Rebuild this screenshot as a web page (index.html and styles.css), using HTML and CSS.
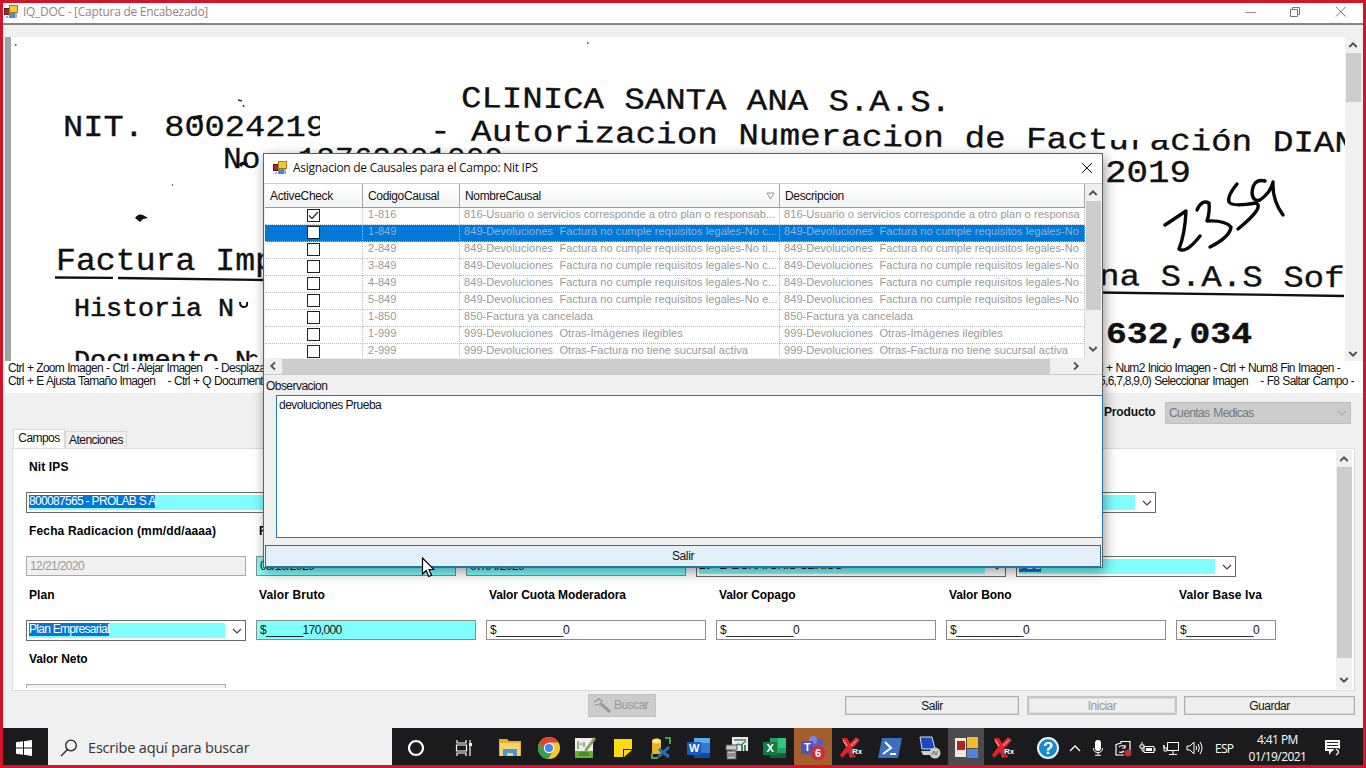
FILE: index.html
```html
<!DOCTYPE html>
<html lang="es">
<head>
<meta charset="utf-8">
<title>IQ_DOC - [Captura de Encabezado]</title>
<link rel="stylesheet" href="styles.css">
</head>
<body>
<svg class="defs" width="0" height="0">
  <symbol id="app" viewBox="0 0 14 14"><rect x=".5" y="3.5" width="6" height="6" fill="#a8281c" stroke="#5e1510"/><rect x="5.5" y=".5" width="8" height="7" fill="#f5c73c" stroke="#a57a14"/><rect x="5" y="8" width="6" height="5" fill="#4f86dc"/><path d="M2 11h2v2H2zM11 8h2v5h-2z" fill="#9cb4dc"/></symbol>
  <symbol id="up" viewBox="0 0 10 8"><path d="M1.3 6 5 2.3 8.7 6" fill="none" stroke="#505050" stroke-width="1.9"/></symbol>
  <symbol id="down" viewBox="0 0 10 8"><path d="M1.3 2 5 5.7 8.7 2" fill="none" stroke="#505050" stroke-width="1.9"/></symbol>
  <symbol id="chev" viewBox="0 0 10 8"><path d="M1 2 5 6 9 2" fill="none" stroke="currentColor" stroke-width="1.2"/></symbol>
  <symbol id="rx" viewBox="0 0 24 24"><path d="M3 2 8 2 11 7 17 1 21 4 14 12 17 21 11 22 9 16 3 22 1 19 7 11z" fill="#d9242b"/><path d="M4 4l4 6M18 4l-6 6" stroke="#ff8585" stroke-width="1.5"/><rect x="13" y="11" width="11" height="8" fill="#1d1d1f" opacity=".8"/><text x="13" y="18" font-size="8" font-weight="bold" fill="#fff" font-family="Liberation Sans, sans-serif">Rx</text></symbol>
</svg>
<div class="screen">
  <header class="title">
    <svg width="14" height="14"><use href="#app"/></svg>
    <span class="title-text">IQ_DOC - [Captura de Encabezado]</span>
    <svg class="winbtns" width="105" height="12" fill="none" stroke="#8a6a74"><path d="M1 6.500h11" stroke="#c08090"/><path d="M46.500 3.500h7v7h-7zM48.500 3.500v-2h7v7h-2"/><path d="M92 1l9.500 9.500M101.500 1 92 10.500"/></svg>
  </header>

  <section class="viewer">
    <svg class="doc" width="1340" height="324" viewBox="5 37 1340 324" font-family="Liberation Mono, monospace" font-size="32" fill="#111">
      <rect x="5" y="37" width="1340" height="324" fill="#fff"/>
      <rect x="5" y="37" width="6" height="324" fill="#a0a4a2"/>
      <g stroke="#111" stroke-width=".35">
        <text x="461" y="107" textLength="490" lengthAdjust="spacingAndGlyphs" font-size="30" transform="rotate(.5 461 107)">CLINICA SANTA ANA S.A.S.</text>
        <text x="430" y="140" textLength="925" lengthAdjust="spacingAndGlyphs" font-size="30" transform="rotate(.75 430 140)">- Autorizacion Numeracion de Facturación DIAN</text>
        <text x="63" y="136" textLength="263" lengthAdjust="spacingAndGlyphs" font-size="30">NIT. 80024219</text>
        <text x="223" y="168" textLength="280" lengthAdjust="spacingAndGlyphs" font-size="30">No. 18762001000</text>
        <text x="1105" y="182" textLength="86" lengthAdjust="spacingAndGlyphs" font-size="32">2019</text>
        <text x="56" y="270" textLength="219" lengthAdjust="spacingAndGlyphs" font-size="31">Factura Imp</text>
        <text x="74" y="316" textLength="160" lengthAdjust="spacingAndGlyphs" font-size="25" stroke-width=".5">Historia N</text>
        <text x="74" y="368" textLength="177" lengthAdjust="spacingAndGlyphs" font-size="25" stroke-width=".5">Documento N</text>
        <text x="1099" y="285" textLength="266" lengthAdjust="spacingAndGlyphs" font-size="30" transform="rotate(.5 1099 285)">na S.A.S Soft</text>
        <text x="1106" y="343" textLength="146" lengthAdjust="spacingAndGlyphs" font-size="29" font-weight="bold">632,034</text>
      </g>
      <path d="M320 114h12v24h-12z" fill="#fff"/>
      <path d="M1106 125h64v15h-64z" fill="#fff"/>
      <path d="M193 119q4-3 9-2M240 166q3-5 7-1" fill="none" stroke="#111" stroke-width="3.500"/>
      <path d="M135 218q3-5 8-3l5 3-5 1-3 3z"/>
      <path d="M238 100l4 1M243 105l1 2M172 185h1M15 45h1.500M587 43h1.500" stroke="#333" stroke-width="1.500"/>
      <path d="M240 302q0 5 4 5 4 0 3-5" fill="none" stroke="#111" stroke-width="2"/>
      <path d="M250 357q4-4 7 0" fill="none" stroke="#111" stroke-width="2"/>
      <path d="M55 277.500l58 .4M118 278l146 2M1100 292.500 1344 296" stroke="#111" stroke-width="2.300"/>
      <g fill="none" stroke="#080808" stroke-width="3.400" stroke-linecap="round" stroke-linejoin="round">
        <path d="M1165 225 1186 211Q1185 234 1179 249 1186 254 1200 236"/>
        <path d="M1197 210Q1202 199 1209 203 1210 212 1207 221 1225 220 1231 227 1230 237 1210 247" />
        <path d="M1237 184Q1227 196 1229 202 1232 207 1256 203 1265 207 1238 229"/>
        <path d="M1265 181Q1253 178 1252 193 1253 202 1260 200 1271 192 1273 182 1272 200 1283 215"/>
      </g>
    </svg>
    <div class="vbar"><svg width="10" height="16"><use href="#up" y="4" width="10" height="8"/></svg><i class="thumb doc-thumb"></i><svg class="end" width="10" height="14"><use href="#down" y="3" width="10" height="8"/></svg></div>
  </section>

  <section class="help">
    <div class="help-left"><p>Ctrl + Zoom Imagen - Ctrl - Alejar Imagen &nbsp;&nbsp; - Desplazar</p><p>Ctrl + E Ajusta Tamaño Imagen &nbsp;&nbsp; - Ctrl + Q Documento</p></div>
    <div class="help-right"><p>Ctrl + Num2 Inicio Imagen - Ctrl + Num8 Fin Imagen -</p><p>5,6,7,8,9,0) Seleccionar Imagen &nbsp;&nbsp; - F8 Saltar Campo -</p></div>
  </section>

  <section class="product"><b>Producto</b><div class="product-sel"><span>Cuentas Medicas</span><svg width="10" height="8"><use href="#chev"/></svg></div></section>

  <nav class="tabs"><span class="tab on">Campos</span><span class="tab">Atenciones</span></nav>

  <section class="panel">
    <div class="form">
      <div class="row"><div class="field w1130"><label>Nit IPS</label><div class="combo"><span class="fill"><mark>800087565 - PROLAB S A</mark></span><svg width="10" height="8"><use href="#chev"/></svg></div></div></div>
      <div class="row">
        <div class="field w220"><label class="wide">Fecha Radicacion (mm/dd/aaaa)</label><div class="text off">12/21/2020</div></div>
        <div class="field w200"><label>Fecha</label><div class="text cyan">08/10/2020</div></div>
        <div class="field w220"><label></label><div class="text cyan">07/04/2020</div></div>
        <div class="field w310"><label></label><div class="combo"><span class="fill lab">20 - LABORATORIO CLINICO</span><svg width="10" height="8"><use href="#chev"/></svg></div></div>
        <div class="field w220"><label></label><div class="combo"><span class="fill"><mark>PBS</mark></span><svg width="10" height="8"><use href="#chev"/></svg></div></div>
      </div>
      <div class="row">
        <div class="field w220"><label>Plan</label><div class="combo"><span class="fill"><mark class="tight">Plan Empresarial</mark></span><svg width="10" height="8"><use href="#chev"/></svg></div></div>
        <div class="field w220"><label>Valor Bruto</label><div class="text cyan">$______170,000</div></div>
        <div class="field w220"><label class="narrow">Valor Cuota Moderadora</label><div class="text">$___________0</div></div>
        <div class="field w220"><label class="narrow">Valor Copago</label><div class="text">$___________0</div></div>
        <div class="field w220"><label class="narrow">Valor Bono</label><div class="text">$___________0</div></div>
        <div class="field w100"><label>Valor Base Iva</label><div class="text">$___________0</div></div>
      </div>
      <div class="row"><div class="field w200"><label class="narrow">Valor Neto</label><div class="text off"></div></div></div>
    </div>
    <div class="vbar"><svg width="10" height="17"><use href="#up" y="5" width="10" height="8"/></svg><i class="thumb form-thumb"></i><svg class="end" width="10" height="16"><use href="#down" y="3" width="10" height="8"/></svg></div>
  </section>

  <footer class="actions">
    <div class="find"><svg width="20" height="18" fill="none" stroke="#979797"><path d="M1 5l5-3 3 2-2 3-5 1" stroke-width="1.200"/><path d="M8 7l9 8" stroke-width="3"/></svg><span>Buscar</span></div>
    <div class="btn salir">Salir</div><div class="btn off iniciar">Iniciar</div><div class="btn guardar">Guardar</div>
  </footer>

  <div class="taskbar">
    <div class="start"><svg width="16" height="16" fill="#fff"><path d="M0 2.300 7 1.300V7.500H0zM8 1.200 16 0v7.500H8zM0 8.500h7v6.200L0 13.700zM8 8.500h8V16l-8-1.200z"/></svg></div>
    <div class="search"><svg width="18" height="18" fill="none" stroke="#222" stroke-width="1.300"><circle cx="11" cy="6.500" r="5.300"/><path d="M7.500 10.500 1 17"/></svg><span>Escribe aquí para buscar</span></div>
    <div class="apps">
      <div class="app a48"><svg width="18" height="18"><circle cx="9" cy="9" r="7" fill="none" stroke="#fff" stroke-width="2.200"/></svg></div>
      <div class="app a48"><svg width="18" height="18" fill="none" stroke="#fff" stroke-width="1.200"><path d="M2 1v3h9V1M2 17v-3h9v3M1.500 6h10v6h-10zM15 1v16"/><path d="M14 4h3v3h-3z" fill="#fff" stroke="none"/></svg></div>
      <div class="app a42"><svg width="22" height="19"><path d="M0 1h8l2 2h12v15H0z" fill="#e9a92f"/><path d="M1 5h20v13H1z" fill="#fbd468"/><path d="M4 18v-7h14v7h-4v-3H8v3z" fill="#3a9be0"/></svg></div>
      <div class="app a35"><svg width="22" height="22"><circle cx="11" cy="11" r="11" fill="#f8c82c"/><path d="M1.500 5.500A11 11 0 0 1 20.500 5.500H11L6 13z" fill="#e34133"/><path d="M1.500 5.500A11 11 0 0 0 10 22l5-8-9-1z" fill="#2fa04f"/><circle cx="11" cy="11" r="5.200" fill="#fff"/><circle cx="11" cy="11" r="4.100" fill="#4285f4"/></svg></div>
      <div class="app"><svg width="22" height="22"><path d="M1 1h18v20H1z" fill="#eee"/><path d="M1 14h18v7H1z" fill="#62b529"/><path d="M4 4v8M6 7h2M10 5v5M5 16h10M5 18h10" stroke="#42612d"/><path d="M20 0l2 2-9 12-3 1 1-3z" fill="#8b9d57"/></svg></div>
      <div class="app"><svg width="20" height="20"><path d="M1 1h18v10l-8 8H1z" fill="#fbdb12"/><path d="M10 11h9v8h-9z" fill="#222"/><path d="M11 12h8l-8 7z" fill="#fbdb12"/></svg></div>
      <div class="app"><svg width="22" height="22"><path d="M2 4h9v13H2z" fill="#e6b524"/><ellipse cx="6.500" cy="4" rx="4.500" ry="2.500" fill="#ffe478"/><path d="M15 1h5v6M2 16v5h6" fill="none" stroke="#48a43f" stroke-width="2"/><path d="M9 12l10 8M19 10 8 20" stroke="#266fb5" stroke-width="3"/></svg></div>
      <div class="app"><svg width="24" height="22"><path d="M7 1h16v20H7z" fill="#2b7cd3"/><path d="M7 1h16v5H7z" fill="#5aaaf0"/><path d="M7 16h16v5H7z" fill="#154a9a"/><rect y="5" width="14" height="13" fill="#185abd"/><text x="2" y="15" class="g">W</text></svg></div>
      <div class="app"><svg width="24" height="24"><path d="M7 1h16v14H7z" fill="#e8ecee"/><path d="M9 4h12M9 11l4-3 3 1 5-4" stroke="#4b8067" stroke-width="1.500" fill="none"/><path d="M16 8h2v7h-2zM19 9h2v6h-2z" fill="#4b8067"/><path d="M1 9h11v5H1zM2 15h9v8H2z" fill="#c9c9c9" stroke="#555"/><path d="M3 18h7M3 20h7" stroke="#555"/></svg></div>
      <div class="app"><svg width="24" height="22"><path d="M7 1h16v20H7z" fill="#21a366"/><path d="M15 1h8v10h-8z" fill="#33c481"/><path d="M7 16h16v5H7z" fill="#185c37"/><rect y="5" width="14" height="13" fill="#107c41"/><text x="3.500" y="15" class="g">X</text></svg></div>
      <div class="app teams"><svg width="26" height="26"><circle cx="13" cy="5" r="4" fill="#7b83eb"/><circle cx="20" cy="7" r="3" fill="#5059c9"/><path d="M7 9h16v9q-6 8-14 3z" fill="#5a62c8"/><rect x="1" y="6" width="12" height="13" fill="#4b53bc"/><text x="4" y="16" class="g">T</text><circle cx="18" cy="18" r="7.500" fill="#c72f3c"/><text x="15" y="22" class="g">6</text></svg></div>
      <div class="app"><svg width="24" height="24"><use href="#rx"/></svg></div>
      <div class="app a40"><svg width="24" height="20"><path d="M4 0h20l-4 20H0z" fill="#3b6fbd"/><path d="M7 4l6 6-8 6M12 16h6" fill="none" stroke="#fff" stroke-width="2"/></svg></div>
      <div class="app"><svg width="24" height="24"><path d="M3 1h12l3 12H5z" fill="#1b46c5" stroke="#d9e3ee"/><path d="M4 15h13l3 4H6z" fill="#ccd0d3"/><circle cx="18" cy="17" r="5.500" fill="#c9cbc9"/><path d="M15 19l2-4 2 4 2-4" fill="none" stroke="#63705f"/></svg></div>
      <div class="app current"><svg width="23" height="21"><path d="M0 1h11v19H0z" fill="#f1e6dc"/><path d="M2 4h8v9H2z" fill="#b2241c"/><path d="M12 0h11v11H12z" fill="#f7b92c"/><path d="M12 12h11v9H12z" fill="#4f85dc"/></svg></div>
      <div class="app"><svg width="24" height="24"><use href="#rx"/></svg></div>
    </div>
    <div class="tray">
      <svg width="22" height="22"><circle cx="11" cy="11" r="10" fill="#178bc9" stroke="#e8f5fb" stroke-width="2"/><text x="6" y="17" font-size="17" font-weight="bold" fill="#fff" font-family="Liberation Sans, sans-serif">?</text></svg>
      <svg class="t1" width="12" height="8" fill="none" stroke="#fff" stroke-width="1.300"><path d="M1 7l5-5 5 5"/></svg>
      <svg class="t2" width="12" height="16"><rect x="3" width="6" height="11" rx="3" fill="#fff"/><path d="M1.500 8q0 4.500 4.500 4.500t4.500-4.500M6 12v3M3 15.300h6" stroke="#fff" fill="none"/></svg>
      <svg class="t3" width="17" height="17" fill="none" stroke="#fff" stroke-width="1.200"><path d="M1 4.500 6 3V1.500h9v9M1 4v11h8M4 7q4-3 6 0M4 12q3 1 5-1M10 5v3H7"/><circle cx="13" cy="13" r="3.500" fill="#c52b35" stroke="none"/></svg>
      <svg class="t4" width="17" height="14" fill="none" stroke="#fff"><path d="M5 5.500h10v6H5zM16 7v3M3 1v3M1 4h4v3H1zM3 7v3h2"/><path d="M7 7h6v3H7z" fill="#fff" stroke="none"/></svg>
      <svg class="t5" width="17" height="15" fill="none" stroke="#fff"><path d="M4.500 1.500h11v8h-11zM10 10v3M6 13.500h8M1 4v3h3v3H1z"/></svg>
      <svg class="t6" width="17" height="14" fill="none" stroke="#fff"><path d="M1 5h3l4-4v12L4 9H1zM10 5q1.500 2 0 4M12 3q3 4 0 8M14 1q4 6 0 12"/></svg>
      <span class="esp">ESP</span>
      <div class="clock"><span>4:41 PM</span><span>01/19/2021</span></div>
      <svg class="t7" width="18" height="17"><path d="M1 0h15v11H8l-3 4v-4H1z" fill="#fff"/><path d="M3 2.500h11M3 5.500h11M3 8.500h8" stroke="#222"/><circle cx="13" cy="12" r="4" fill="#222"/><path d="M12 9q5 3 0 6" fill="none" stroke="#fff" stroke-width="1.300"/></svg>
    </div>
  </div>

  <div class="dialog">
    <div class="dlg-title"><svg width="14" height="14"><use href="#app"/></svg><span>Asignacion de Causales para el Campo: Nit IPS</span><svg class="close" width="12" height="12" stroke="#111"><path d="M1 1l10 10M11 1 1 11"/></svg></div>
    <div class="grid">
      <div class="table">
        <div class="tr th"><span>ActiveCheck</span><span>CodigoCausal</span><span>NombreCausal<svg width="9" height="8" fill="none" stroke="#999"><path d="M1 1h7L4.500 7z"/></svg></span><span>Descripcion</span></div>
        <div class="tr"><span><i class="chk"><svg width="11" height="11"><path d="M1 5.500 4 8.500 10 2" fill="none" stroke="#333" stroke-width="1.300"/></svg></i></span><span>1-816</span><span>816-Usuario o servicios corresponde a otro plan o responsab...</span><span>816-Usuario o servicios corresponde a otro plan o responsa</span></div>
        <div class="tr sel"><span><i class="chk"></i></span><span>1-849</span><span>849-Devoluciones&nbsp; Factura no cumple requisitos legales-No c...</span><span>849-Devoluciones&nbsp; Factura no cumple requisitos legales-No</span></div>
        <div class="tr"><span><i class="chk"></i></span><span>2-849</span><span>849-Devoluciones&nbsp; Factura no cumple requisitos legales-No ti...</span><span>849-Devoluciones&nbsp; Factura no cumple requisitos legales-No</span></div>
        <div class="tr"><span><i class="chk"></i></span><span>3-849</span><span>849-Devoluciones&nbsp; Factura no cumple requisitos legales-No c...</span><span>849-Devoluciones&nbsp; Factura no cumple requisitos legales-No</span></div>
        <div class="tr"><span><i class="chk"></i></span><span>4-849</span><span>849-Devoluciones&nbsp; Factura no cumple requisitos legales-No c...</span><span>849-Devoluciones&nbsp; Factura no cumple requisitos legales-No</span></div>
        <div class="tr"><span><i class="chk"></i></span><span>5-849</span><span>849-Devoluciones&nbsp; Factura no cumple requisitos legales-No e...</span><span>849-Devoluciones&nbsp; Factura no cumple requisitos legales-No</span></div>
        <div class="tr"><span><i class="chk"></i></span><span>1-850</span><span>850-Factura ya cancelada</span><span>850-Factura ya cancelada</span></div>
        <div class="tr"><span><i class="chk"></i></span><span>1-999</span><span>999-Devoluciones&nbsp; Otras-Imágenes ilegibles</span><span>999-Devoluciones&nbsp; Otras-Imágenes ilegibles</span></div>
        <div class="tr"><span><i class="chk"></i></span><span>2-999</span><span>999-Devoluciones&nbsp; Otras-Factura no tiene sucursal activa</span><span>999-Devoluciones&nbsp; Otras-Factura no tiene sucursal activa</span></div>
      </div>
      <div class="vbar"><svg width="10" height="17"><use href="#up" y="5" width="10" height="8"/></svg><i class="thumb grid-thumb"></i><svg class="end" width="10" height="16"><use href="#down" y="3" width="10" height="8"/></svg></div>
    </div>
    <div class="hbar"><svg width="17" height="10"><path d="M11 1.300 7.300 5 11 8.700" fill="none" stroke="#505050" stroke-width="1.900"/></svg><i></i><svg class="end" width="17" height="10"><path d="M6 1.300 9.700 5 6 8.700" fill="none" stroke="#505050" stroke-width="1.900"/></svg></div>
    <div class="obs-label">Observacion</div>
    <div class="obs">devoluciones Prueba</div>
    <div class="dlg-btn">Salir</div>
  </div>
  <svg class="cursor" width="14" height="21"><path d="M1.500 1v16l3.700-3.500 2.600 6 2.700-1.200-2.500-5.800h5z" fill="#fff" stroke="#000" stroke-width="1.200"/></svg>
</div>
</body>
</html>
```
FILE: styles.css
```css
* { box-sizing: border-box; }
body { margin: 0; font: 11px/13px "Liberation Sans", Arial, sans-serif; color: #111; }
p { margin: 0; }
svg { display: block; flex: none; }
.defs { position: absolute; }
.screen { position: relative; width: 1366px; height: 768px; border: 3px solid #d2142a; background: #f0f0f0; overflow: hidden; display: flex; flex-direction: column; white-space: nowrap; }

.title { height: 22px; flex: none; display: flex; align-items: center; background: #fff; border-bottom: 2px solid #858585; padding: 0 14px 2px 1px; }
.title-text { margin-left: 5px; font: 12px/16px "Open Sans", sans-serif; color: #9a8288; letter-spacing: -.28px; }
.winbtns { margin-left: auto; }

.viewer { height: 336px; flex: none; padding: 12px 0 0 2px; display: flex; }
.vbar { width: 16px; display: flex; flex-direction: column; align-items: center; background: #f0f0f0; }
.vbar .end { margin-top: auto; }
.thumb { width: 15px; background: #cdcdcd; }
.doc-thumb { height: 49px; }
.form-thumb { height: 191px; }
.grid-thumb { height: 109px; }

.help { height: 32px; flex: none; margin: 0 0 0 2px; padding: 1px 9px 0 3px; background: #fff; display: flex; justify-content: space-between; font-size: 12px; letter-spacing: -.72px; word-spacing: .5px; }
.help-left, .help-right { width: 255px; overflow: hidden; }
.help-right { display: flex; flex-direction: column; align-items: flex-end; }
.help-right p:first-child { margin-right: 14px; }

.product { height: 36px; flex: none; padding: 9px 12px 0 0; display: flex; justify-content: flex-end; font-size: 12px; }
.product b { width: 61px; height: 21px; line-height: 21px; letter-spacing: -.15px; }
.product-sel { width: 186px; height: 22px; border: 1px solid #bfbfbf; background: #ccc; color: #777; display: flex; align-items: center; justify-content: space-between; padding: 0 3px; font-size: 12px; letter-spacing: -.6px; word-spacing: 1px; }
.product-sel svg { color: #aaa; }

.tabs { height: 19px; flex: none; display: flex; align-items: flex-end; padding-left: 10px; font-size: 12px; letter-spacing: -.55px; }
.tab { height: 17px; width: 62px; text-align: center; border: 1px solid #d9d9d9; border-bottom: 0; line-height: 17px; }
.tab.on { height: 19px; width: 52px; background: #fff; }

.panel { width: 1343px; height: 243px; flex: none; margin-left: 9px; background: #fff; border: 1px solid #dcdcdc; display: flex; justify-content: space-between; padding: 1px 2px 1px 0; }
.form { height: 238px; padding: 10px 0 0 13px; overflow: hidden; }
.row { display: flex; gap: 10px; height: 64px; }
.field { display: flex; flex-direction: column; flex: none; }
.field label { height: 32px; padding-left: 3px; font-weight: bold; font-size: 12px; line-height: 14px; color: #000; letter-spacing: .12px; }
.field label.wide { letter-spacing: .15px; }
.field label.narrow { letter-spacing: -.08px; }
.w1130 { width: 1130px; } .w220 { width: 220px; } .w200 { width: 200px; } .w310 { width: 310px; } .w100 { width: 100px; }
.text { height: 20px; border: 1px solid #8c8c8c; background: #fff; padding: 0 3px; line-height: 18px; font-size: 12px; letter-spacing: -.6px; }
.text.cyan { background: #7fffff; }
.text.off { background: #f0f0f0; color: #999; border-color: #aaa; }
.combo { height: 21px; border: 1px solid #696969; background: #fff; padding: 2px 3px 2px 2px; display: flex; align-items: center; gap: 7px; color: #444; }
.fill { flex: 1; height: 15px; background: #7fffff; color: #111; line-height: 13px; display: block; font-size: 12px; letter-spacing: -.75px; }
mark { background: #0078d7; color: #fff; display: inline-block; height: 13px; letter-spacing: -.68px; }
mark.tight { letter-spacing: -.72px; }

.actions { flex: 1; display: flex; padding: 3px 8px 0 585px; align-items: flex-start; font-size: 12px; letter-spacing: -.5px; }
.find { width: 68px; height: 23px; background: #ccc; border: 1px solid #c2c2c2; color: #999; display: flex; align-items: center; gap: 1px; padding-left: 4px; margin-right: 189px; }
.btn { height: 19px; margin-top: 2px; border: 1px solid #adadad; box-shadow: inset 0 0 0 1px #dedede; background: #efefef; text-align: center; line-height: 18px; }
.btn.off { color: #999; border: 2px solid #c6c6c6; line-height: 16px; }
.salir { width: 174px; } .iniciar { width: 150px; margin-left: 8px; } .guardar { width: 171px; margin-left: 7px; }

.taskbar { height: 37px; flex: none; background: #1b1b1d; display: flex; align-items: center; color: #fff; }
.start { width: 45px; padding-left: 13px; margin-top: 2px; }
.search { width: 344px; height: 37px; background: #f1f1f1; display: flex; align-items: center; padding: 3px 0 0 12px; gap: 10px; color: #333; font: 14.500px/20px "Open Sans", sans-serif; letter-spacing: -.18px; }
.apps { display: flex; height: 37px; }
.app { width: 38px; height: 37px; display: flex; align-items: center; justify-content: center; padding-top: 2px; }
.a48 { width: 48px; } .a42 { width: 43px; } .a35 { width: 35px; } .a40 { width: 40px; }
.teams { background: #a55f2c; }
.current { background: #4b4b4d; width: 36px; }
.g { font: bold 11px "Liberation Sans", sans-serif; fill: #fff; }
.tray { display: flex; align-items: center; flex: 1; padding: 3px 21px 0 15px; font: 12px/17px "Open Sans", sans-serif; }
.t1 { margin-left: 10px; } .t2 { margin-left: 11px; } .t3 { margin-left: 11px; } .t4 { margin-left: 7px; } .t5 { margin-left: 7px; } .t6 { margin-left: 6px; }
.esp { margin-left: 12px; letter-spacing: -.7px; }
.clock { display: flex; flex-direction: column; align-items: center; margin-left: 14px; width: 60px; letter-spacing: -.6px; }
.clock span:first-child { margin-top: -1px; }
.t7 { margin-left: auto; }

.dialog { position: absolute; left: 260px; top: 150px; width: 840px; height: 415px; border: 1px solid #626262; background: #f0f0f0; box-shadow: 2px 4px 12px rgba(0,0,0,.4); display: flex; flex-direction: column; }
.dlg-title { height: 30px; flex: none; background: #fff; display: flex; align-items: center; padding: 0 9px 1px; font: 12px/16px "Open Sans", sans-serif; letter-spacing: -.28px; border-bottom: 1px solid #ccc; }
.dlg-title span { margin-left: 6px; }
.close { margin-left: auto; }
.grid { height: 174px; flex: none; display: flex; padding-left: 1px; }
.table { width: 820px; height: 174px; overflow: hidden; background: #fff; }
.tr { display: grid; grid-template-columns: 98px 97px 320px 305px; height: 17px; color: #999; letter-spacing: .07px; }
.tr > span { padding-left: 5px; line-height: 13px; border-right: 1px dotted #bbb; border-bottom: 1px dotted #bbb; overflow: hidden; }
.tr > span:nth-child(n+3) { padding-left: 4px; }
.th { height: 24px; color: #111; background: linear-gradient(#fff, #f2f4f4); font-size: 12px; letter-spacing: -.35px; }
.th > span, .th > span:nth-child(n+3) { line-height: 24px; border-right: 1px solid #a5a5a5; border-bottom: 1px solid #999; display: flex; justify-content: space-between; padding: 0 4px 0 5px; }
.th svg { margin-top: 8px; }
.sel { background: #0078d7; color: #8cb4dc; }
.chk { display: block; width: 13px; height: 13px; border: 1px solid #222; background: #fff; margin: 1px 0 0 37px; }
.hbar { height: 17px; flex: none; display: flex; align-items: center; padding-right: 17px; border-bottom: 1px solid #c8c8c8; }
.hbar i { width: 768px; height: 15px; background: #cdcdcd; margin-left: 1px; }
.hbar .end { margin-left: auto; }
.obs-label { height: 20px; flex: none; padding: 5px 0 0 2px; font-size: 12px; letter-spacing: -.55px; }
.obs { height: 143px; flex: none; margin: 0 -1px 0 12px; background: #fff; border: 1px solid #2678b4; padding: 3px 2px; font-size: 12px; letter-spacing: -.52px; }
.dlg-btn { height: 22px; flex: none; margin: 7px 1px 0; border: 1px solid #2173ad; background: #e3f0fa; text-align: center; line-height: 20px; font-size: 12px; letter-spacing: -.4px; }
.cursor { position: absolute; left: 418px; top: 554px; }
```
